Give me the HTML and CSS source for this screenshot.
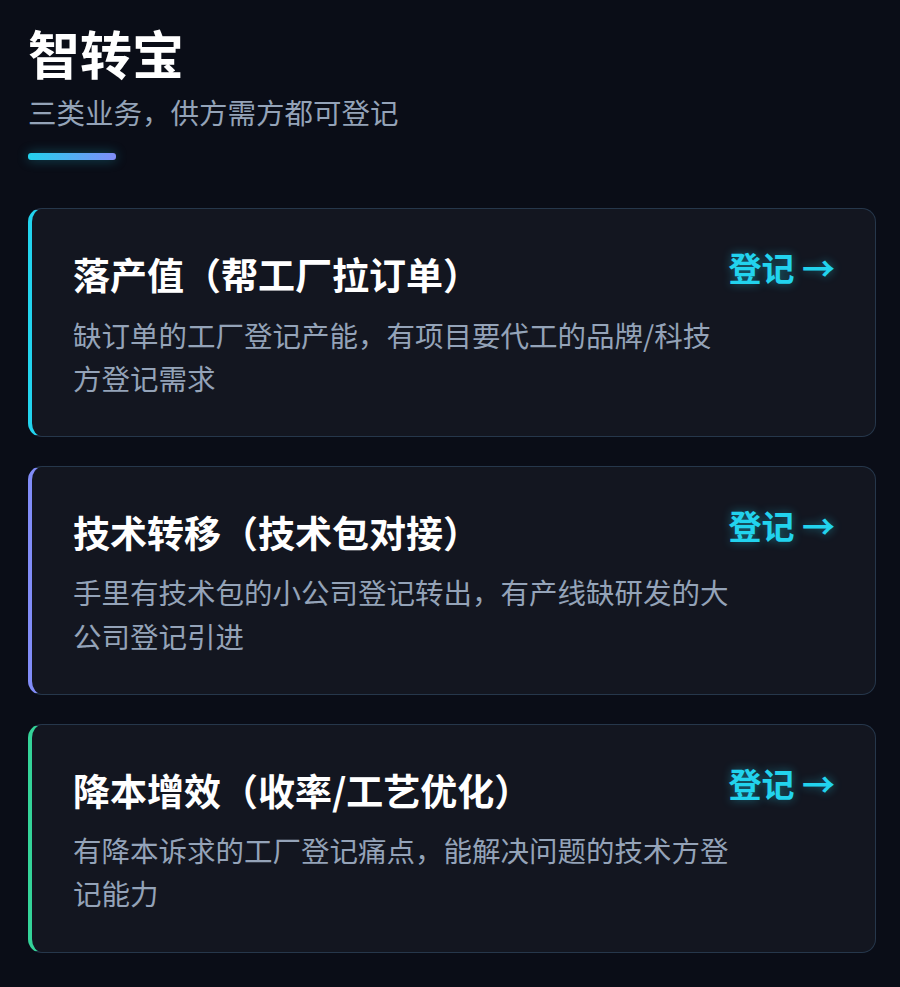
FILE: index.html
```html
<!DOCTYPE html>
<html lang="zh-CN">
<head>
  <meta charset="UTF-8" />
  <meta name="viewport" content="width=device-width, initial-scale=1.0" />
  <title>智转宝</title>
  <link rel="stylesheet" href="styles.css">
</head>
<body>

  <div class="page">
    <header class="intro">
      <h1>智转宝</h1>
      <p class="subtitle">三类业务，供方需方都可登记</p>
      <div class="accent-bar"></div>
    </header>

    <div class="cards">
      <div class="card card-cyan">
        <div class="card-head">
          <h2>落产值（帮工厂拉订单）</h2>
          <a class="register" href="#">登记 →</a>
        </div>
        <p class="desc">缺订单的工厂登记产能，有项目要代工的品牌/科技方登记需求</p>
      </div>

      <div class="card card-purple">
        <div class="card-head">
          <h2>技术转移（技术包对接）</h2>
          <a class="register" href="#">登记 →</a>
        </div>
        <p class="desc">手里有技术包的小公司登记转出，有产线缺研发的大公司登记引进</p>
      </div>

      <div class="card card-green">
        <div class="card-head">
          <h2>降本增效（收率/工艺优化）</h2>
          <a class="register" href="#">登记 →</a>
        </div>
        <p class="desc">有降本诉求的工厂登记痛点，能解决问题的技术方登记能力</p>
      </div>
    </div>
  </div>

</body>
</html>
```

FILE: styles.css
```css
body {
  margin: 0;
  padding: 0;
  background-color: #0a0d17;
  color: #fff;
  font-family: "Noto Sans CJK SC", "Noto Sans", sans-serif;
}
.page {
  padding: 22px 24px 30px 28px;
}
.intro h1 {
  margin: 0;
  font-size: 52px;
  font-weight: 700;
  line-height: 1.2;
  color: #fff;
}
.subtitle {
  margin: 9px 0 0;
  font-size: 28.5px;
  line-height: 1.3;
  color: #94a3b8;
}
.accent-bar {
  width: 88px;
  height: 7px;
  margin-top: 23px;
  border-radius: 3px;
  background: linear-gradient(90deg, #22d3ee, #818cf8);
  box-shadow: 0 0 12px rgba(34, 211, 238, 0.35);
}
.cards {
  display: flex;
  flex-direction: column;
  gap: 29px;
  margin-top: 48px;
}
.card {
  background: #131620;
  border: 1px solid #26374b;
  border-left: 4px solid #22d3ee;
  border-radius: 14px;
  padding: 41px 40px 37px 41px;
}
.card-cyan { border-left-color: #22d3ee; }
.card-purple { border-left-color: #818cf8; }
.card-green { border-left-color: #34d399; }
.card-head {
  display: flex;
  justify-content: space-between;
  align-items: flex-start;
}
.card-head h2 {
  margin: 0;
  font-size: 37px;
  font-weight: 700;
  line-height: 1.3;
  color: #fff;
}
.register {
  margin-top: -4px;
  color: #22d3ee;
  text-decoration: none;
  font-size: 33px;
  font-weight: 700;
  line-height: 1.3;
  text-shadow: 0 0 10px rgba(34, 211, 238, 0.45);
  white-space: nowrap;
}
.desc {
  margin: 14px 0 0;
  max-width: 660px;
  font-size: 28.5px;
  line-height: 1.52;
  color: #94a3b8;
}
```
